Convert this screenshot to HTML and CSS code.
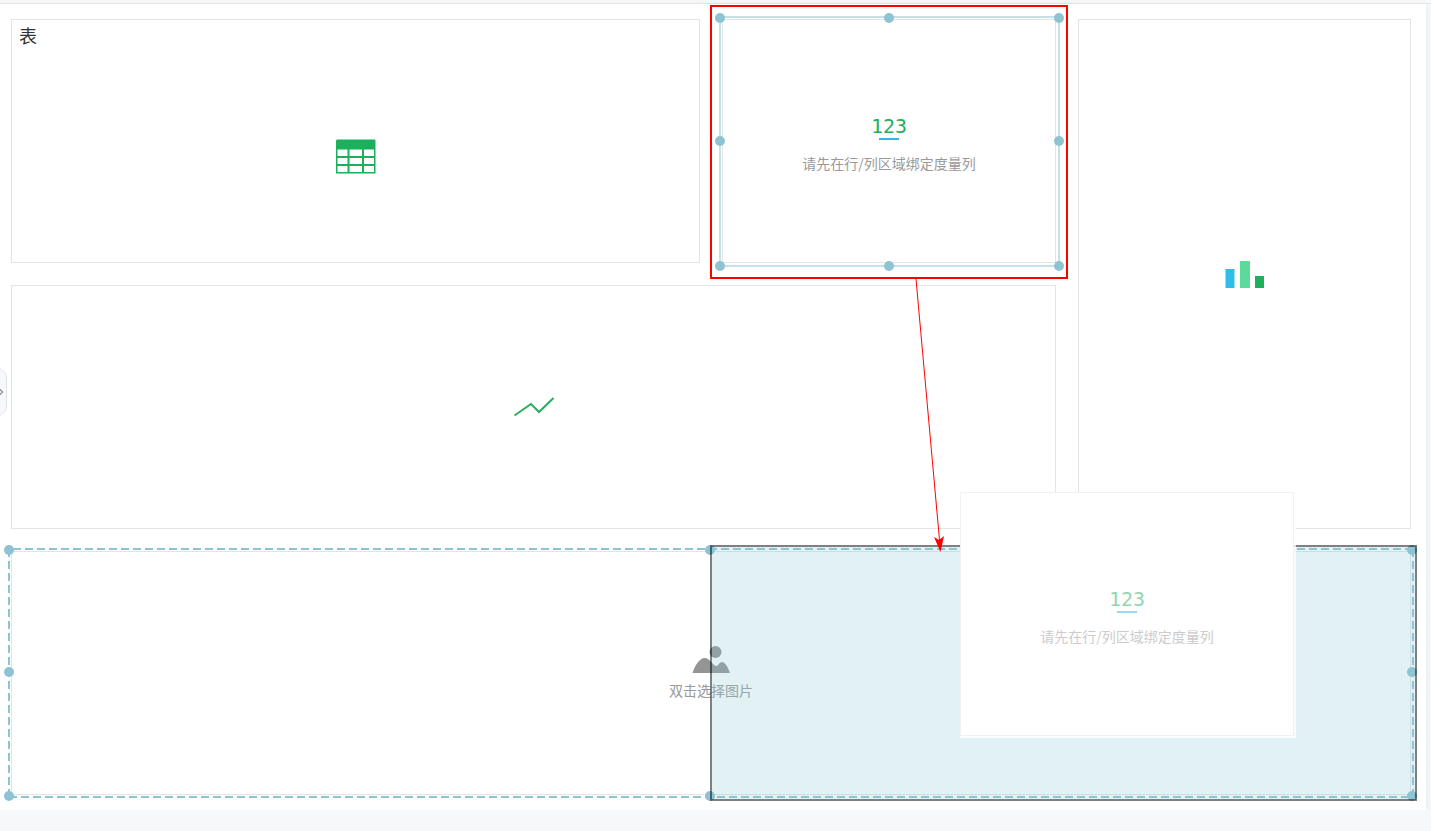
FILE: index.html
```html
<!DOCTYPE html>
<html lang="zh-CN">
<head>
<meta charset="utf-8">
<title>仪表盘</title>
<link rel="stylesheet" href="styles.css">
</head>
<body>
<header class="topbar"></header>
<main class="board">
  <section class="card card-table">
    <h2 class="card-title">表</h2>
    <div class="card-body">
      <svg width="40" height="36" viewBox="0 0 40 36" aria-hidden="true">
        <path fill="#1bb05c" fill-rule="evenodd" d="M1 .5H39L39.500 1.500V34.500H0V1.500ZM1.500 10.500V17H11.500V10.500ZM13.500 10.500V17H26V10.500ZM28 10.500V17H38V10.500ZM1.500 19V25H11.500V19ZM13.500 19V25H26V19ZM28 19V25H38V19ZM1.500 27V33H11.500V27ZM13.500 27V33H26V27ZM28 27V33H38V27Z"/>
      </svg>
    </div>
  </section>

  <section class="card card-metric">
    <div class="card-body">
      <div class="metric">123</div>
      <p class="hint">请先在行/列区域绑定度量列</p>
    </div>
    <div class="highlight"></div>
    <div class="frame frame-solid">
      <i class="dot top left"></i><i class="dot top center"></i><i class="dot top right"></i>
      <i class="dot middle left"></i><i class="dot middle right"></i>
      <i class="dot bottom left"></i><i class="dot bottom center"></i><i class="dot bottom right"></i>
    </div>
  </section>

  <section class="card card-bar">
    <div class="card-body">
      <svg width="40" height="28" viewBox="0 0 40 28" aria-hidden="true">
        <path fill="#2dbde8" d="M.5 9h9v19h-9z"/>
        <path fill="#5cda9b" d="M15 1h10v27H15z"/>
        <path fill="#1bb05c" d="M30 16h9v12h-9z"/>
      </svg>
    </div>
  </section>

  <section class="card card-line">
    <div class="card-body">
      <svg width="40" height="20" viewBox="0 0 40 20" aria-hidden="true">
        <path fill="none" stroke="#27ae60" stroke-width="2" d="M.5 18.500 17 7 25 15 39.500 1"/>
      </svg>
    </div>
  </section>

  <section class="card card-image">
    <div class="card-body">
      <svg width="38" height="27" viewBox="0 0 38 27" aria-hidden="true">
        <circle cx="23.500" cy="6" r="6" fill="#949494"/>
        <path fill="#949494" d="M.5 27C3 19 8 12 12.500 12C18 12 21 20 24.500 20C26.500 20 27 16 30 16C33 16 36 21 38 27Z"/>
      </svg>
      <p class="hint">双击选择图片</p>
    </div>
    <div class="frame frame-dashed">
      <i class="dot top left"></i><i class="dot top center"></i><i class="dot top right"></i>
      <i class="dot middle left"></i><i class="dot middle right"></i>
      <i class="dot bottom left"></i><i class="dot bottom center"></i><i class="dot bottom right"></i>
    </div>
    <div class="drop-target"></div>
  </section>

  <svg class="arrow" width="40" height="276" viewBox="0 0 40 276" aria-hidden="true">
    <path stroke="#f00" stroke-width="1" fill="none" d="M11 1 34.500 262"/>
    <path fill="#f00" d="M35.500 274 29 259 34 262 39 258Z"/>
  </svg>

  <div class="ghost">
    <div class="card">
      <div class="card-body">
        <div class="metric">123</div>
        <p class="hint">请先在行/列区域绑定度量列</p>
      </div>
    </div>
  </div>

  <button class="expander" type="button" aria-label="展开">
    <svg width="8" height="50" viewBox="0 0 8 50" aria-hidden="true">
      <path fill="#f7f8fb" stroke="#dfe3e9" d="M-1 .5 4 5Q6.500 7 6.500 10V40Q6.500 43 4 45L-1 49.500"/>
      <path fill="none" stroke="#999" stroke-width="1.500" d="M-2 20.500 2.500 25-2 29.500"/>
    </svg>
  </button>
</main>
</body>
</html>
```

FILE: styles.css
```css
* {
  box-sizing: border-box;
}

body {
  margin: 0;
  background: #f7f8fa;
  color: #333;
  font-family: "Noto Sans CJK SC", sans-serif;
  font-size: 14px;
  line-height: 20px;
  overflow: hidden;
}

.topbar {
  height: 4px;
  border-bottom: 1px solid #e6e8eb;
}

.board {
  position: relative;
  display: grid;
  grid-template-columns: 689fr 334fr 333fr;
  grid-auto-rows: 244px;
  gap: 22px;
  margin-right: 5px;
  padding: 15px 15px 15px 11px;
  background: #fff;
  box-shadow: 0 2px 8px rgba(0, 0, 0, 0.08);
}

.card {
  position: relative;
  display: flex;
  flex-direction: column;
  min-width: 0;
  border: 1px solid #e4e4e4;
  background: #fff;
}

.card-bar {
  grid-row: span 2;
}

.card-line {
  grid-column: span 2;
}

.card-image {
  grid-column: 1 / -1;
}

.card-title {
  margin: 0;
  padding: 2px 7px 4px;
  font-size: 18px;
  font-weight: 400;
  line-height: 26px;
}

.card-body {
  flex: 1;
  display: flex;
  flex-direction: column;
  align-items: center;
  justify-content: center;
  gap: 8px;
}

.hint {
  margin: 0;
  padding-bottom: 2px;
  color: #999;
  line-height: 18px;
}

.metric {
  position: relative;
  height: 38px;
  padding-top: 4px;
  color: #27ae60;
  font-family: "DejaVu Sans Mono", monospace;
  font-size: 20px;
  line-height: 28px;
}

.metric::after {
  content: "";
  position: absolute;
  left: 50%;
  bottom: 6px;
  width: 20px;
  height: 2px;
  margin-left: -10px;
  background: #35b5e5;
}

.highlight {
  position: absolute;
  inset: -15px -13px -17px -13px;
  border: 2px solid #f00;
}

.frame {
  position: absolute;
  inset: -4px -5px -5px -4px;
}

.frame-solid {
  border: 2px solid #c5e0e7;
}

.frame-dashed {
  inset: -4px;
  background:
    repeating-linear-gradient(90deg, #8dc3d3 0 8px, transparent 8px 12px) 5px 0 / 1392px 2px repeat-x,
    repeating-linear-gradient(90deg, #8dc3d3 0 8px, transparent 8px 12px) 1px 100% / 1392px 2px repeat-x,
    repeating-linear-gradient(180deg, #8dc3d3 0 8px, transparent 8px 12px) 0 1px / 2px 240px repeat-y,
    repeating-linear-gradient(180deg, #8dc3d3 0 8px, transparent 8px 12px) 100% 1px / 2px 240px repeat-y;
}

.dot {
  position: absolute;
  width: 10px;
  height: 10px;
  border-radius: 50%;
  background: #8dc3d3;
}

.frame-solid .top { top: -5px; }
.frame-solid .bottom { bottom: -6px; }
.frame-solid .left { left: -6px; }
.frame-solid .right { right: -6px; }
.frame-dashed .top { top: -3px; }
.frame-dashed .bottom { bottom: -3px; }
.frame-dashed .left { left: -4px; }
.frame-dashed .right { right: -3px; }
.frame .center { left: calc(50% - 6px); }
.frame .middle { top: calc(50% - 6px); }

.drop-target {
  position: absolute;
  inset: -7px -7px -7px 50%;
  margin-left: -1px;
  border: 2px solid rgba(0, 0, 0, 0.5);
  background: rgba(141, 199, 211, 0.26) padding-box;
}

.arrow {
  position: absolute;
  left: 905px;
  top: 274px;
}

.ghost {
  position: absolute;
  left: 960px;
  top: 488px;
  padding: 0 2px 2px 0;
  background: rgba(255, 255, 255, 0.75);
}

.ghost .card {
  width: 334px;
  height: 244px;
  border-color: #f1f1f1;
}

.ghost .card-body {
  opacity: 0.5;
}

.expander {
  position: absolute;
  left: 0;
  top: 363px;
  padding: 0;
  border: 0;
  background: none;
  line-height: 0;
}
```
